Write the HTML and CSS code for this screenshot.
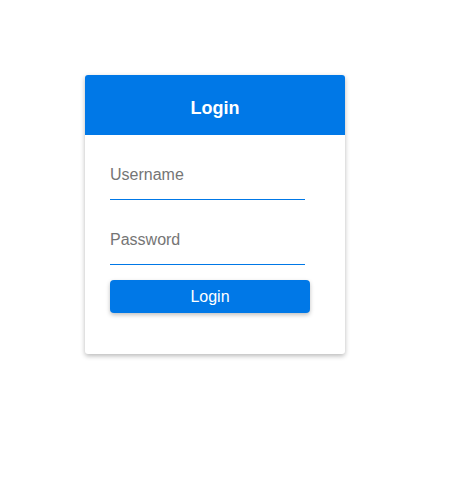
FILE: index.html
```html
<!DOCTYPE html>
<html>
<head>
<meta charset="utf-8">
<link rel="stylesheet" href="styles.css">
</head>
<body>
<div class="page">
  <div class="card">
    <div class="card-header">Login</div>
    <form class="card-body">
      <input class="field" type="text" placeholder="Username">
      <input class="field" type="password" placeholder="Password">
      <button class="btn" type="button">Login</button>
    </form>
  </div>
</div>
</body>
</html>
```
FILE: styles.css
```css
html, body {
  margin: 0;
  padding: 0;
  background: #fff;
  font-family: "Liberation Sans", Arial, sans-serif;
}
.page {
  min-height: 481px;
  padding: 75px 0 0 85px;
  box-sizing: border-box;
}
.card {
  width: 260px;
  background: #fff;
  border-radius: 3px;
  box-shadow: 0 2px 5px rgba(0, 0, 0, 0.28);
  overflow: hidden;
}
.card-header {
  height: 60px;
  background: #0078e7;
  color: #fff;
  font-weight: bold;
  font-size: 18px;
  display: flex;
  align-items: center;
  justify-content: center;
  padding-top: 6px;
  box-sizing: border-box;
}
.card-body {
  display: flex;
  flex-direction: column;
  align-items: flex-start;
  padding: 25px 25px 41px;
  margin: 0;
}
.field {
  display: block;
  width: 195px;
  height: 40px;
  box-sizing: border-box;
  border: none;
  border-bottom: 1px solid #0078e7;
  padding: 0 0 10px 0;
  font-family: inherit;
  font-size: 16px;
  color: #333;
  outline: none;
  background: transparent;
}
.field::placeholder {
  color: #757575;
}
.field + .field {
  margin-top: 25px;
}
.btn {
  margin-top: 15px;
  width: 200px;
  height: 33px;
  border: none;
  border-radius: 4px;
  background: #0078e7;
  color: #fff;
  font-family: inherit;
  font-size: 16px;
  box-shadow: 0 2px 4px rgba(0, 0, 0, 0.25);
  padding: 0;
}
```
